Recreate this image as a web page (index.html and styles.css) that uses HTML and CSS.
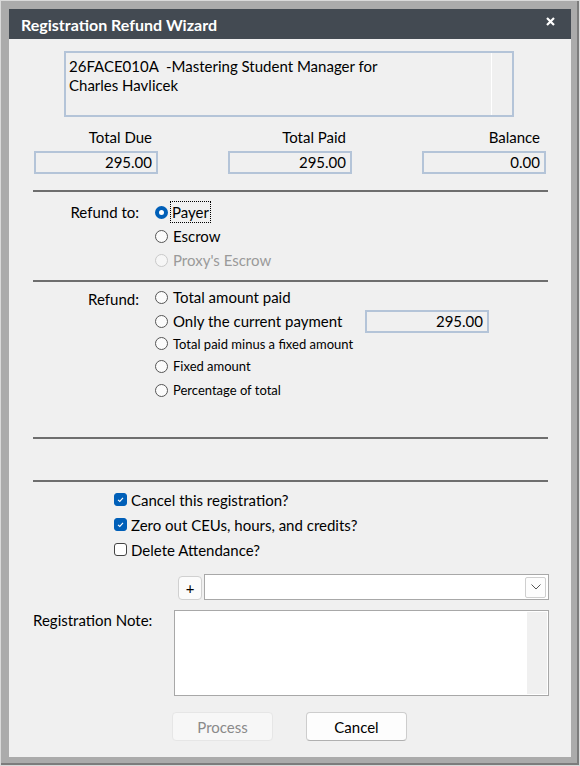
FILE: index.html
```html
<!DOCTYPE html>
<html lang="en">
<head>
    <meta charset="UTF-8">
    <meta name="viewport" content="width=device-width, initial-scale=1.0">
    <title>Registration Refund Wizard</title>
    <link rel="stylesheet" href="styles.css">
</head>
<body>
    <div class="frame">
        <div class="dialog">
            <div class="titlebar">
                <span class="title">Registration Refund Wizard</span>
                <svg class="close" width="9" height="9" viewBox="0 0 9 9">
                    <path d="M1 1 L8 8 M8 1 L1 8" stroke="#fff" stroke-width="2.2" fill="none"/>
                </svg>
            </div>

            <div class="content">
                <div class="info">
                    <div class="info-text">26FACE010A&nbsp; -Mastering Student Manager for<br>Charles Havlicek</div>
                    <div class="info-track"></div>
                </div>

                <div class="totals">
                    <div class="total">
                        <div class="total-label">Total Due</div>
                        <div class="field">295.00</div>
                    </div>
                    <div class="total">
                        <div class="total-label">Total Paid</div>
                        <div class="field">295.00</div>
                    </div>
                    <div class="total">
                        <div class="total-label">Balance</div>
                        <div class="field">0.00</div>
                    </div>
                </div>

                <div class="divider"></div>

                <div class="section refund-to">
                    <div class="section-label">Refund to:</div>
                    <div class="options">
                        <label class="option"><span class="radio on"></span><span class="focus">Payer</span></label>
                        <label class="option"><span class="radio"></span>Escrow</label>
                        <label class="option disabled"><span class="radio"></span>Proxy's Escrow</label>
                    </div>
                </div>

                <div class="divider gap-small"></div>

                <div class="section refund">
                    <div class="section-label">Refund:</div>
                    <div class="options">
                        <label class="option"><span class="radio"></span>Total amount paid</label>
                        <div class="option-row">
                            <label class="option wide"><span class="radio"></span>Only the current payment</label>
                            <div class="field amount">295.00</div>
                        </div>
                        <label class="option small short"><span class="radio"></span>Total paid minus a fixed amount</label>
                        <label class="option small"><span class="radio"></span>Fixed amount</label>
                        <label class="option small"><span class="radio"></span>Percentage of total</label>
                    </div>
                </div>

                <div class="divider gap-big"></div>
                <div class="divider gap-empty"></div>

                <div class="checks">
                    <label class="check"><span class="box on"><svg width="9" height="9" viewBox="0 0 9 9"><path d="M2 4.8 L3.8 6.4 L7 2.8" stroke="#fff" stroke-width="1.1" fill="none"/></svg></span>Cancel this registration?</label>
                    <label class="check"><span class="box on"><svg width="9" height="9" viewBox="0 0 9 9"><path d="M2 4.8 L3.8 6.4 L7 2.8" stroke="#fff" stroke-width="1.1" fill="none"/></svg></span>Zero out CEUs, hours, and credits?</label>
                    <label class="check"><span class="box"></span>Delete Attendance?</label>
                </div>

                <div class="combo-row">
                    <button class="plus">+</button>
                    <div class="combo">
                        <div class="combo-btn">
                            <svg width="10" height="6" viewBox="0 0 10 6"><path d="M0.5 0.5 L5 5 L9.5 0.5" stroke="#555" stroke-width="1" fill="none"/></svg>
                        </div>
                    </div>
                </div>

                <div class="note-row">
                    <div class="note-label">Registration Note:</div>
                    <div class="note">
                        <div class="note-track"></div>
                    </div>
                </div>

                <div class="actions">
                    <button class="btn" disabled>Process</button>
                    <button class="btn">Cancel</button>
                </div>
            </div>
        </div>
    </div>
</body>
</html>
```

FILE: styles.css
```css
body {
    margin: 0;
    font-family: Lato, "Open Sans", sans-serif;
    font-size: 15px;
    color: #000;
    background-color: #ababab;
}
.frame {
    width: 580px;
    height: 766px;
    box-sizing: border-box;
    padding: 8px 0 0 8px;
    border: 1px solid #dadada;
    box-shadow: inset -2px -2px 0 #7c7c7c;
}
.dialog {
    width: 562px;
    height: 748px;
    background: #f0f0f0;
}
.titlebar {
    height: 30px;
    background: #434a52;
    display: flex;
    align-items: center;
    justify-content: space-between;
    padding: 0 16px 0 12px;
}
.title {
    color: #fff;
    font-weight: bold;
    font-size: 16px;
    margin-top: 1px;
}
.close {
    margin-top: -6px;
}
.content {
    padding: 12px 22px 0 24px;
}
.info {
    margin-left: 31px;
    width: 450px;
    height: 66px;
    box-sizing: border-box;
    border: 2px solid #b4c4d8;
    display: flex;
}
.info-text {
    flex: 1;
    padding: 4px 0 0 3px;
    line-height: 19px;
}
.info-track {
    width: 20px;
    border-left: 1px solid #fff;
}
.totals {
    margin-top: 10px;
    display: flex;
    justify-content: space-between;
    padding: 0 3px 0 1px;
}
.total {
    width: 124px;
}
.total-label {
    line-height: 20px;
    text-align: right;
    padding-right: 6px;
    margin-bottom: 4px;
}
.field {
    height: 23px;
    box-sizing: border-box;
    border: 2px solid #b4c4d8;
    text-align: right;
    padding-right: 4px;
    line-height: 19px;
}
.divider {
    margin-top: 16px;
    height: 2px;
    width: 515px;
    background: #6e6e6e;
}
.gap-small {
    margin-top: 8px;
}
.gap-big {
    margin-top: 35px;
}
.gap-empty {
    margin-top: 41px;
}
.section {
    display: grid;
    grid-template-columns: 106px 1fr;
    column-gap: 16px;
}
.refund-to {
    margin-top: 8px;
}
.refund {
    margin-top: 3px;
}
.section-label {
    text-align: right;
    line-height: 24px;
}
.refund .section-label {
    padding-top: 2px;
}
.option {
    display: flex;
    align-items: center;
    height: 24px;
    gap: 5px;
}
.option.small {
    font-size: 13px;
}
.option.short {
    height: 21px;
}
.option.disabled {
    color: #9a9a9a;
}
.option-row {
    display: flex;
    align-items: center;
}
.option.wide {
    width: 210px;
}
.field.amount {
    width: 124px;
}
.radio {
    width: 13px;
    height: 13px;
    box-sizing: border-box;
    border: 1px solid #555;
    border-radius: 50%;
    background: #fbfbfb;
}
.radio.on {
    border: 4px solid #005fb8;
    background: #fff;
}
.disabled .radio {
    border-color: #c9c9c9;
    background: #f6f6f6;
}
.focus {
    outline: 1px dotted #000;
    line-height: 20px;
    padding: 0 1px;
    margin-left: -2px;
}
.checks {
    margin-top: 5px;
    padding-left: 81px;
}
.check {
    display: flex;
    align-items: center;
    gap: 4px;
    height: 25px;
}
.box {
    width: 13px;
    height: 13px;
    box-sizing: border-box;
    border: 1px solid #444;
    border-radius: 3px;
    background: #fff;
    display: flex;
    align-items: center;
    justify-content: center;
}
.box.on {
    background: #005fb8;
    border-color: #005fb8;
}
.combo-row {
    margin-top: 12px;
    display: flex;
    align-items: flex-end;
    gap: 2px;
    padding-left: 145px;
}
.plus {
    width: 24px;
    height: 24px;
    padding: 0;
    border: 1px solid #d0d0d0;
    border-radius: 4px;
    background: #fbfbfb;
    font-family: Lato, sans-serif;
    font-size: 15px;
    line-height: 20px;
    color: #000;
}
.combo {
    flex: 1;
    height: 26px;
    box-sizing: border-box;
    border: 1px solid #a8a8a8;
    background: #fff;
    display: flex;
    justify-content: flex-end;
    align-items: center;
    padding-right: 2px;
}
.combo-btn {
    width: 21px;
    height: 21px;
    box-sizing: border-box;
    border: 1px solid #cfcfcf;
    border-radius: 2px;
    background: #fdfdfd;
    display: flex;
    align-items: center;
    justify-content: center;
}
.note-row {
    margin-top: 10px;
    display: flex;
    align-items: flex-start;
}
.note-label {
    width: 141px;
    line-height: 20px;
}
.note {
    flex: 1;
    height: 86px;
    box-sizing: border-box;
    border: 1px solid #a8a8a8;
    background: #fff;
    display: flex;
    justify-content: flex-end;
    padding: 1px;
}
.note-track {
    width: 20px;
    background: #f0f0f0;
}
.actions {
    margin-top: 16px;
    padding-left: 139px;
    display: flex;
    gap: 33px;
}
.btn {
    width: 101px;
    height: 29px;
    border: 1px solid #cdcdcd;
    border-bottom-color: #b0b0b0;
    border-radius: 4px;
    background: #fdfdfd;
    font-family: Lato, sans-serif;
    font-size: 15px;
    color: #000;
}
.btn:disabled {
    background: #f7f7f7;
    border-color: #e6e6e6;
    color: #8a8a8a;
}
```
